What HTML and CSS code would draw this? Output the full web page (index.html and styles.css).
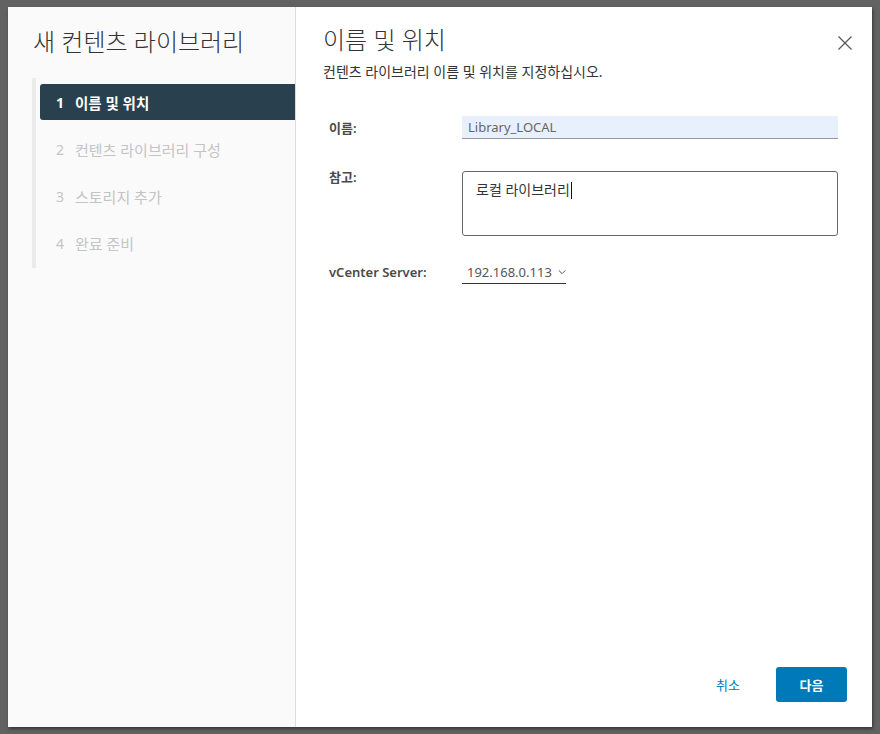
FILE: index.html
```html
<!DOCTYPE html>
<html lang="ko">
<head>
    <meta charset="UTF-8">
    <title>새 컨텐츠 라이브러리</title>
    <link rel="stylesheet" href="styles.css">
</head>
<body>

    <div class="modal">
        <div class="sidebar">
            <h1>새 컨텐츠 라이브러리</h1>
            <ul class="steps">
                <li class="step active"><span class="num">1</span>이름 및 위치</li>
                <li class="step"><span class="num">2</span>컨텐츠 라이브러리 구성</li>
                <li class="step"><span class="num">3</span>스토리지 추가</li>
                <li class="step"><span class="num">4</span>완료 준비</li>
            </ul>
        </div>

        <div class="content">
            <div class="header">
                <div>
                    <h2>이름 및 위치</h2>
                    <p class="desc">컨텐츠 라이브러리 이름 및 위치를 지정하십시오.</p>
                </div>
                <button class="close" aria-label="닫기">
                    <svg width="16" height="16" viewBox="0 0 16 16">
                        <path d="M1.5 1.5 L14.5 14.5 M14.5 1.5 L1.5 14.5" stroke="#5a5a5a" stroke-width="1.3" fill="none"/>
                    </svg>
                </button>
            </div>

            <div class="form">
                <div class="row">
                    <label>이름:</label>
                    <div class="input">Library_LOCAL</div>
                </div>
                <div class="row top">
                    <label>참고:</label>
                    <div class="textarea">로컬 라이브러리<span class="caret"></span></div>
                </div>
                <div class="row">
                    <label>vCenter Server:</label>
                    <div class="select">
                        192.168.0.113
                        <svg width="10" height="6" viewBox="0 0 10 6">
                            <path d="M1 1 L5 5 L9 1" stroke="#444" stroke-width="1.1" fill="none"/>
                        </svg>
                    </div>
                </div>
            </div>

            <div class="footer">
                <button class="btn btn-link">취소</button>
                <button class="btn btn-primary">다음</button>
            </div>
        </div>
    </div>

</body>
</html>
```

FILE: styles.css
```css
body {
    font-family: "Noto Sans", "Noto Sans CJK KR", sans-serif;
    background: #626262;
    margin: 0;
    padding: 7px 8px;
    color: #333;
}
.modal {
    display: flex;
    width: 864px;
    height: 720px;
    background: #fff;
    box-shadow: 1px 2px 3px rgba(0,0,0,0.45);
}
.sidebar {
    width: 287px;
    background: #fafafa;
    border-right: 1px solid #dcdcdc;
    padding-top: 19px;
}
.sidebar h1 {
    margin: 0 0 20px 25px;
    font-size: 24px;
    line-height: 32px;
    font-weight: 300;
    color: #333;
}
.steps {
    list-style: none;
    margin: 0 0 0 24px;
    padding: 6px 0 7px 4px;
    border-left: 4px solid #ebebeb;
}
.step {
    display: flex;
    align-items: center;
    height: 36px;
    margin-bottom: 11px;
    padding-left: 16px;
    font-size: 15px;
    color: #c4c4c4;
    border-radius: 3px 0 0 3px;
}
.step:last-child {
    margin-bottom: 0;
}
.step .num {
    width: 19px;
    font-size: 14px;
}
.step.active {
    background: #29414e;
    color: #fff;
    font-weight: 700;
    font-size: 14.5px;
}
.content {
    flex: 1;
    display: flex;
    flex-direction: column;
    padding: 17px 25px 25px 27px;
}
.header {
    display: flex;
    justify-content: space-between;
    align-items: flex-start;
}
.header h2 {
    margin: 0;
    font-size: 24px;
    line-height: 32px;
    font-weight: 300;
    color: #333;
}
.desc {
    margin: 6px 0 0;
    font-size: 14px;
    line-height: 20px;
    color: #333;
}
.close {
    background: none;
    border: none;
    padding: 0;
    margin: 11px -6px 0 0;
    cursor: pointer;
}
.form {
    margin-top: 34px;
    padding-left: 6px;
    width: 509px;
}
.row {
    display: flex;
    align-items: center;
    margin-bottom: 32px;
}
.row.top {
    align-items: flex-start;
    margin-bottom: 24px;
}
.row label {
    width: 133px;
    font-size: 13px;
    font-weight: 600;
    color: #4a4a4a;
}
.row.top label {
    margin-top: -4px;
}
.input {
    flex: 1;
    height: 23px;
    line-height: 22px;
    padding-left: 6px;
    background: #e8f0fe;
    border-bottom: 1px solid #9a9a9a;
    font-size: 13px;
    color: #666;
    box-sizing: border-box;
}
.textarea {
    flex: 1;
    height: 65px;
    box-sizing: border-box;
    border: 1px solid #666;
    border-radius: 3px;
    padding: 8px 13px;
    font-size: 14px;
    line-height: 20px;
    color: #333;
}
.caret {
    display: inline-block;
    width: 0;
    height: 17px;
    border-left: 1px solid #111;
    vertical-align: -4px;
    margin-left: 1px;
}
.select {
    display: flex;
    align-items: center;
    gap: 6px;
    width: 104px;
    height: 24px;
    box-sizing: border-box;
    padding-left: 5px;
    border-bottom: 1px solid #333;
    font-size: 13px;
    color: #565656;
}
.footer {
    margin-top: auto;
    display: flex;
    justify-content: flex-end;
    align-items: center;
    gap: 24px;
}
.btn {
    font-family: inherit;
    font-size: 13px;
    border: none;
    border-radius: 3px;
    cursor: pointer;
    height: 35px;
}
.btn-link {
    background: none;
    color: #0079b8;
    padding: 0 12px;
}
.btn-primary {
    width: 71px;
    background: #0079b8;
    color: #fff;
    font-weight: 600;
}
.btn-primary:hover {
    background: #004a70;
}
```
